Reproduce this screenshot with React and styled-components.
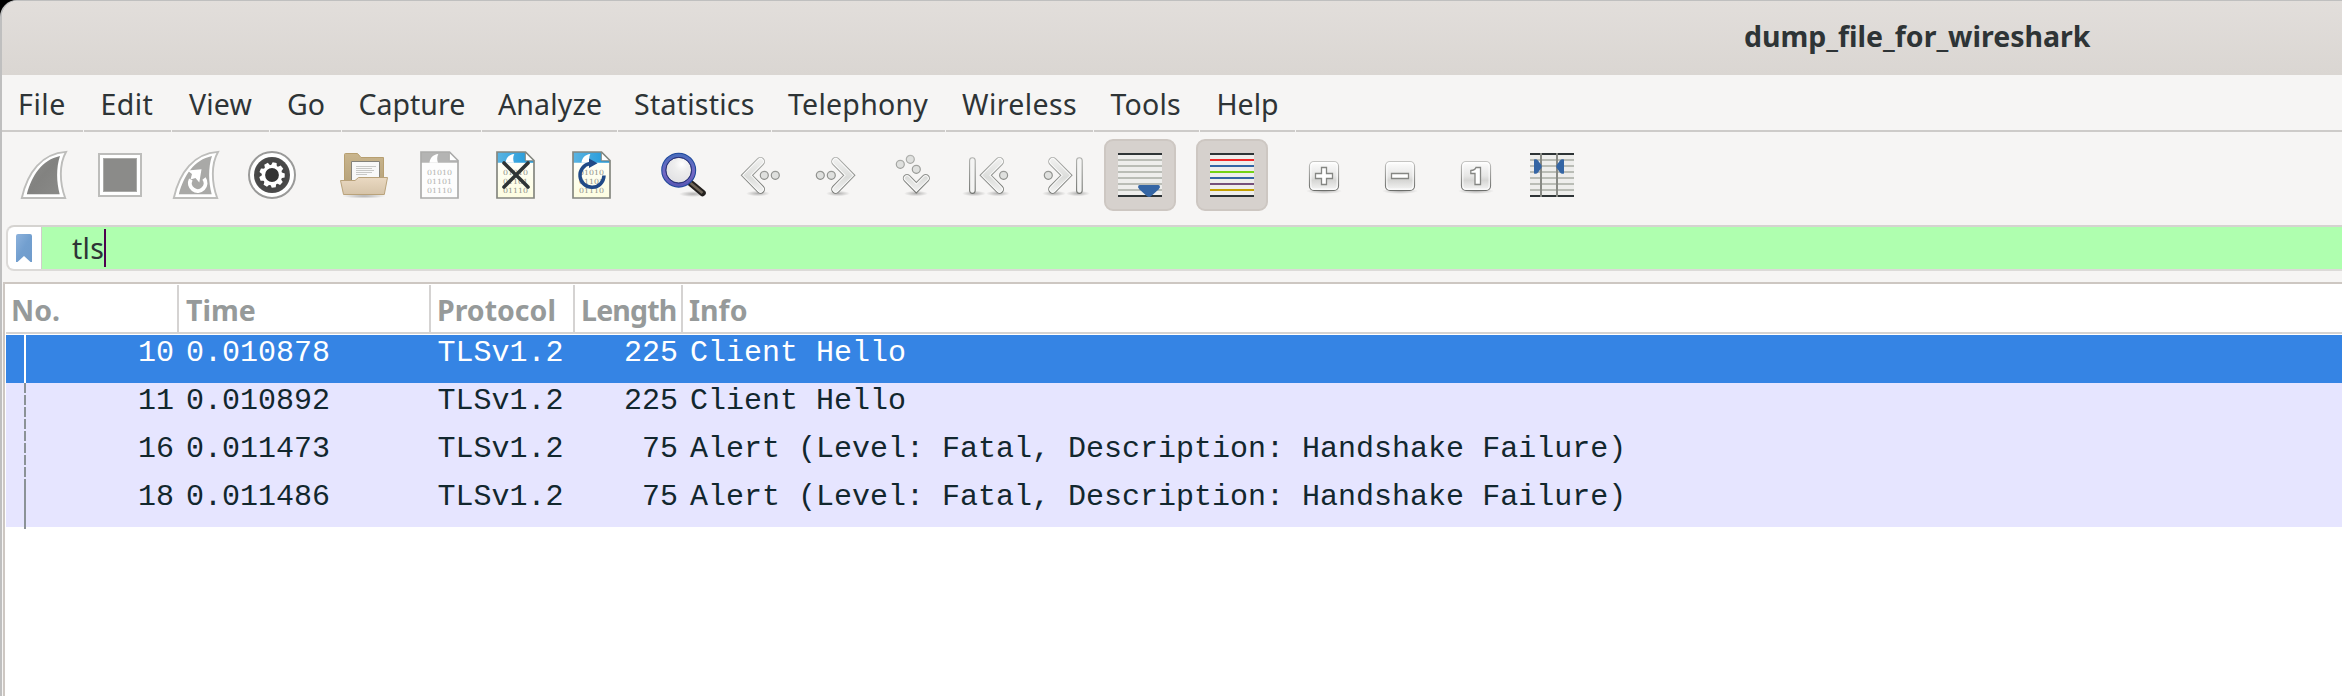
import React from "react";
import styled, { createGlobalStyle, css } from "styled-components";

const GlobalStyle = createGlobalStyle`
  html, body { margin: 0; background: #000; }
  body { width: 2342px; height: 696px; overflow: hidden; }
  * { box-sizing: border-box; }
`;

const ui = `"Noto Sans", "Open Sans", sans-serif`;

const Desktop = styled.div`
  width: 2342px;
  height: 696px;
  overflow: hidden;
  background: #000;
`;

const Window = styled.div`
  display: flex;
  flex-direction: column;
  width: 2360px;
  height: 720px;
  background: #f6f5f4;
  border-left: 2px solid #bfbfbf;
  border-top: 1px solid #bfbfbf;
  border-top-left-radius: 17px;
  overflow: hidden;
`;

const TitleBar = styled.header`
  height: 74px;
  flex: none;
  display: flex;
  padding-left: 1742px;
  background: linear-gradient(#e2dedb, #dad6d2);
`;

const Title = styled.h1`
  margin: 0;
  font: 700 28.5px/70px ${ui};
  color: #2e3436;
  white-space: nowrap;
`;

const MenuBar = styled.nav`
  display: flex;
  flex: none;
  height: 57px;
  &::after {
    content: "";
    flex: 1;
    border-bottom: 2px solid #cdcbc9;
  }
`;

const MenuItem = styled.div`
  width: ${(p) => p.$width - 1}px;
  margin-right: 1px;
  padding-left: ${(p) => p.$pad}px;
  border-bottom: 2px solid #cdcbc9;
  font: 400 28.5px/59px ${ui};
  letter-spacing: ${(p) => p.$spacing}px;
  color: #2e3436;
  white-space: nowrap;
`;

const Toolbar = styled.div`
  display: flex;
  flex: none;
  gap: 20px;
  height: 93px;
  padding: 7px 0 0 6px;
`;

const ToolGroup = styled.div`
  display: flex;
  gap: 4px;
`;

const ToolButton = styled.div`
  display: grid;
  place-items: center;
  width: 72px;
  height: 72px;
  border-radius: 9px;
  ${(p) =>
    p.$on &&
    css`
      background: #d6d1cd;
      border: 2px solid #cdc7c2;
    `}
`;

const FilterBar = styled.div`
  display: flex;
  flex: none;
  height: 46px;
  margin-left: 4px;
  border: 2px solid #dcdad8;
  border-top-color: #d5d3d0;
  border-radius: 8px;
  background: #fff;
  overflow: hidden;
`;

const BookmarkButton = styled.div`
  width: 34px;
  padding: 6px 0 0 8px;
  border-right: 1px solid #d0cecb;
`;

const FilterField = styled.div`
  flex: 1;
  display: flex;
  align-items: flex-start;
  padding-left: 30px;
  background: #afffaf;
  font: 400 28.5px/42px ${ui};
  letter-spacing: 0.3px;
  color: #2e3436;
`;

const Caret = styled.span`
  width: 2px;
  height: 38px;
  margin-top: 2px;
  background: #500050;
`;

const PacketList = styled.section`
  flex: 1;
  margin: 11px 0 0 1px;
  background: #fff;
  border-left: 2px solid #cdc7c2;
  border-top: 2px solid #cdc7c2;
  padding-left: 1px;
`;

const columns = "173px 252px 144px 108px 1fr";

const HeaderRow = styled.div`
  display: grid;
  grid-template-columns: ${columns};
  grid-template-rows: 50px;
  height: 51px;
  padding-top: 1px;
`;

const HeaderCell = styled.div`
  min-width: 0;
  border-right: 2px solid #d5d3d2;
  border-bottom: 2px solid #d5d3d2;
  margin-bottom: 1px;
  padding-left: ${(p) => p.$pad}px;
  font: 700 28.5px/51px ${ui};
  letter-spacing: ${(p) => p.$spacing}px;
  color: #969a9a;
  white-space: nowrap;
`;

const Row = styled.div`
  display: grid;
  grid-template-columns: ${columns};
  height: 48px;
  background: ${(p) => (p.$selected ? "#3584e4" : "#e6e5ff")};
  color: ${(p) => (p.$selected ? "#fff" : "#12272e")};
  font: 400 30px/36px "Liberation Mono", monospace;
  white-space: pre;
`;

const Cell = styled.div`
  padding-left: ${(p) => p.$pad || 0}px;
  padding-right: 5px;
  text-align: ${(p) => (p.$right ? "right" : "left")};
`;

const NumberCell = styled(Cell)`
  display: flex;
  justify-content: space-between;
  padding-left: 18px;
`;

const lineFill = {
  solid: "#8b9297",
  white: "#fff",
  dashed: "repeating-linear-gradient(#8b9297 0 10px, transparent 10px 12px)",
};

const StreamLine = styled.i`
  width: 2px;
  height: ${(p) => (p.$last ? 50 : 48)}px;
  background: ${(p) => lineFill[p.$kind]};
`;

const Icon = ({ children }) => (
  <svg width="48" height="48" viewBox="0 0 48 48" fill="none" overflow="visible">
    {children}
  </svg>
);

const HiddenSvg = styled.svg`
  display: block;
  height: 0;
  position: absolute;
`;

const Defs = () => (
  <HiddenSvg width="0" height="0">
    <defs>
      <linearGradient id="fin" x1="0" y1="0" x2="1" y2="1">
        <stop offset="0" stopColor="#8e8e8c" />
        <stop offset=".5" stopColor="#828280" />
        <stop offset="1" stopColor="#8a8a88" />
      </linearGradient>
      <linearGradient id="sky" x1="0" y1="0" x2="1" y2="0">
        <stop offset="0" stopColor="#5bb4e2" />
        <stop offset="1" stopColor="#1c98da" />
      </linearGradient>
      <linearGradient id="page" x1="0" y1="0" x2="0" y2="1">
        <stop offset="0" stopColor="#fff" />
        <stop offset="1" stopColor="#fdfde0" />
      </linearGradient>
      <linearGradient id="edge" gradientUnits="userSpaceOnUse" x1="0" y1="4" x2="0" y2="44">
        <stop offset="0" stopColor="#b4b5b2" />
        <stop offset="1" stopColor="#6f716d" />
      </linearGradient>
      <linearGradient id="metal" gradientUnits="userSpaceOnUse" x1="0" y1="6" x2="0" y2="43">
        <stop offset="0" stopColor="#f2f2f1" />
        <stop offset=".55" stopColor="#dcdddb" />
        <stop offset="1" stopColor="#f4f4f3" />
      </linearGradient>
      <linearGradient id="key" x1="0" y1="0" x2="0" y2="1">
        <stop offset="0" stopColor="#fdfdfd" />
        <stop offset=".5" stopColor="#e6e6e5" />
        <stop offset=".65" stopColor="#d6d6d4" />
        <stop offset="1" stopColor="#f6f6f6" />
      </linearGradient>
      <linearGradient id="keyEdge" x1="0" y1="0" x2="0" y2="1">
        <stop offset="0" stopColor="#c4c4c2" />
        <stop offset="1" stopColor="#6d6e6b" />
      </linearGradient>
      <linearGradient id="folderBack" x1="0" y1="0" x2="0" y2="1">
        <stop offset="0" stopColor="#c9b58d" />
        <stop offset="1" stopColor="#b19d76" />
      </linearGradient>
      <linearGradient id="folderFront" x1="0" y1="0" x2="0" y2="1">
        <stop offset="0" stopColor="#ead9c2" />
        <stop offset="1" stopColor="#d6c4a9" />
      </linearGradient>
      <linearGradient id="rim" x1="0" y1="0" x2="0" y2="1">
        <stop offset="0" stopColor="#4c6cbc" />
        <stop offset=".6" stopColor="#7468c4" />
        <stop offset="1" stopColor="#5a58b4" />
      </linearGradient>
      <radialGradient id="lens" cx=".6" cy=".3" r=".8">
        <stop offset="0" stopColor="#fff" />
        <stop offset=".3" stopColor="#eeeeee" />
        <stop offset="1" stopColor="#dcdcdf" />
      </radialGradient>
      <radialGradient id="shade">
        <stop offset="0" stopColor="#000" stopOpacity=".28" />
        <stop offset="1" stopColor="#000" stopOpacity="0" />
      </radialGradient>
      <radialGradient id="disc">
        <stop offset="0" stopColor="#333" />
        <stop offset="1" stopColor="#4c4c4c" />
      </radialGradient>
      <linearGradient id="ribbon" x1="0" y1="0" x2="1" y2="1">
        <stop offset="0" stopColor="#8db2dc" />
        <stop offset=".5" stopColor="#729fcf" />
        <stop offset="1" stopColor="#6f9bcb" />
      </linearGradient>
    </defs>
  </HiddenSvg>
);

const Fin = ({ fill }) => (
  <>
    <path d="M1.8 47C7.500 21 22 2.500 46 .9C39 13 39.500 32 45.200 47Z" fill="#fff" stroke="#bdbdbb" strokeWidth="1.900" />
    <path d="M6.800 43.200C12 24 22 9 40 5C36 17 36.500 31 39.700 43.200Z" fill={fill} />
  </>
);

const StartIcon = () => (
  <Icon>
    <Fin fill="url(#fin)" />
  </Icon>
);

const StopIcon = () => (
  <Icon>
    <rect x="3" y="3" width="42" height="42" fill="#fff" stroke="#bdbdbb" strokeWidth="2" />
    <rect x="7.500" y="7.500" width="33" height="33" fill="#8b8b89" stroke="#a9a9a7" />
  </Icon>
);

const RestartIcon = () => (
  <Icon>
    <Fin fill="#a9a9a7" />
    <path d="M18.800 28.500A7.800 7.800 0 1 0 32 27.500" stroke="#fff" strokeWidth="4" />
    <path d="M15.500 19.500L29.500 18.300L27.300 31.500L23.500 27L18.500 28.500L20 23Z" fill="#fff" />
  </Icon>
);

const GearIcon = () => (
  <Icon>
    <circle cx="24" cy="24" r="23" fill="#fff" stroke="#9a9a99" strokeWidth="2" />
    <circle cx="24" cy="24" r="18" fill="url(#disc)" />
    {[0, 40, 80, 120, 160, 200, 240, 280, 320].map((a) => (
      <path key={a} d="M21 15L22 11.300H26L27 15Z" fill="#fff" transform={`rotate(${a + 12} 24 24)`} />
    ))}
    <circle cx="24" cy="24" r="8.600" fill="#333" stroke="#fff" strokeWidth="3.400" />
  </Icon>
);

const OpenIcon = () => (
  <Icon>
    <ellipse cx="24" cy="45" rx="22" ry="2.600" fill="url(#shade)" />
    <path d="M4.500 40V3.500Q4.500 2.500 5.500 2.500H17.500L21 6.500H43.500V40Z" fill="url(#folderBack)" stroke="#b79f70" />
    <path d="M11.500 32V10.500H39.500V32Z" fill="#f8f8f8" stroke="#84827a" />
    <path d="M16 15.500H36M16 17.500H32M16 19.500H34M16 21.500H32M16 23.500H27" stroke="#c2c2c0" strokeWidth=".9" />
    <path d="M.5 29.500H15L18.500 26.500H47.500L44.300 43.500H3.500Z" fill="url(#folderFront)" stroke="#b9a27a" strokeLinejoin="round" />
  </Icon>
);

const Page = ({ band, fill, edge, ink, children }) => (
  <Icon>
    <path d="M5 1H33.500L42 9.500V47H5Z" fill={fill} />
    <path d="M5 1H33.500L42 9.500V11.800H5Z" fill={band} />
    <path d="M13.500 11.800C14 7 17 3.500 22.300 3C20.800 6 21 9 22 11.800Z" fill="#fff" />
    <path d="M33.300 1.500V9.800H42" fill="#fff" stroke={edge} strokeWidth="1" />
    <path d="M5 1H33.500L42 9.500V47H5Z" stroke={edge} strokeWidth="1.700" />
    <g fill={ink} fontFamily="DejaVu Serif, serif" fontSize="7.200">
      <text x="11" y="23.700" textLength="25" lengthAdjust="spacingAndGlyphs">01010</text>
      <text x="11" y="32.700" textLength="25" lengthAdjust="spacingAndGlyphs">01101</text>
      <text x="11" y="41.700" textLength="25" lengthAdjust="spacingAndGlyphs">01110</text>
    </g>
    {children}
  </Icon>
);

const SaveIcon = () => <Page band="#b4b4b3" fill="#fdfdfd" edge="#acacab" ink="#b0b0ae" />;

const CloseIcon = () => (
  <Page band="url(#sky)" fill="url(#page)" edge="#85877f" ink="#8e8f87">
    <path d="M12 12L36 36M36 12L12 36" stroke="#2e3436" strokeWidth="3.600" strokeLinecap="round" />
  </Page>
);

const ReloadIcon = () => (
  <Page band="url(#sky)" fill="url(#page)" edge="#85877f" ink="#8e8f87">
    <path d="M36 24.500A12 12 0 1 1 22 12.500" stroke="#204a87" strokeWidth="3.500" />
    <path d="M21 7.500L29.500 12.200L21 17Z" fill="#204a87" />
  </Page>
);

const FindIcon = () => (
  <Icon>
    <ellipse cx="33" cy="43" rx="14" ry="3" fill="url(#shade)" />
    <path d="M30.500 32L42.500 42" stroke="#24211e" strokeWidth="6.600" strokeLinecap="round" />
    <path d="M30.500 32L42.500 42" stroke="#6e6458" strokeWidth="2.600" />
    <circle cx="18.700" cy="19.200" r="15" fill="url(#lens)" stroke="#204a9c" strokeWidth="5" />
    <circle cx="18.700" cy="19.200" r="14.800" stroke="url(#rim)" strokeWidth="3.200" />
    <circle cx="18.700" cy="19.200" r="12.800" stroke="#2c2a6c" strokeWidth=".9" />
  </Icon>
);

const Ball = ({ x, y = 24.3 }) => (
  <circle cx={x} cy={y} r="4" fill="#dfe0de" stroke="url(#edge)" strokeWidth="1.200" />
);

const Chevron = ({ d, w = 9 }) => (
  <>
    <path d={d} stroke="url(#edge)" strokeWidth={w} strokeLinecap="round" />
    <path d={d} stroke="#fafafa" strokeWidth={w - 2} strokeLinecap="round" />
    <path d={d} stroke="url(#metal)" strokeWidth={w - 4} strokeLinecap="round" />
  </>
);

const Bar = ({ x }) => (
  <rect x={x} y="6.800" width="5.600" height="35.600" rx="2.800" fill="#f4f4f3" stroke="url(#edge)" strokeWidth="1.100" />
);

const Shadow = ({ x }) => <ellipse cx={x} cy="42.500" rx="12" ry="2.800" fill="url(#shade)" />;

const PrevIcon = () => (
  <Icon>
    <Shadow x={22} />
    <Chevron d="M24.500 10.500L10.900 24.300L24.500 38.200" />
    <Ball x={28.3} />
    <Ball x={39.3} />
  </Icon>
);

const NextIcon = () => (
  <Icon>
    <Shadow x={26} />
    <Chevron d="M23.700 10.500L37.300 24.300L23.700 38.200" />
    <Ball x={8.3} />
    <Ball x={19.3} />
  </Icon>
);

const GotoIcon = () => (
  <Icon>
    <Shadow x={28} />
    <Ball x={12.3} y={13.3} />
    <Ball x={22.3} y={8.3} />
    <Ball x={28.3} y={18.3} />
    <Chevron d="M19 27.300L28.300 36.700L37.700 27.300" w={8.4} />
  </Icon>
);

const FirstIcon = () => (
  <Icon>
    <Shadow x={10} />
    <Shadow x={34} />
    <Bar x={5.6} />
    <Chevron d="M35.500 10.500L21.700 24.300L35.500 38.200" />
    <Ball x={39.6} />
  </Icon>
);

const LastIcon = () => (
  <Icon>
    <Shadow x={14} />
    <Shadow x={38} />
    <Bar x={36.6} />
    <Chevron d="M12.700 10.500L26.400 24.300L12.700 38.200" />
    <Ball x={8.3} />
  </Icon>
);

const Lines = ({ colors }) => (
  <>
    <rect x="2" y="2" width="44" height="44" fill="#eeeeec" />
    <path d="M2 3H46M2 45H46" stroke="#2e3436" strokeWidth="2" />
    {colors.map((c, i) => (
      <path key={i} d={`M2 ${9 + i * 6}H46`} stroke={c} strokeWidth="2" />
    ))}
  </>
);
const grayLines = Array(6).fill("#babdb6");

const AutoScrollIcon = () => (
  <Icon>
    <Lines colors={grayLines} />
    <path d="M23.500 34H42.500Q44.500 34.300 43.800 36.500L42.500 38.500L35 45.300Q33 46.500 31 45.300L23.500 38.500L22.200 36.500Q21.500 34.300 23.500 34Z" fill="#3465a4" />
  </Icon>
);

const ColorizeIcon = () => (
  <Icon>
    <Lines colors={["#ef2929", "#3465a4", "#73d216", "#3465a4", "#75507b", "#c4a000"]} />
  </Icon>
);

const Key = ({ children }) => (
  <Icon>
    <ellipse cx="24" cy="40" rx="18" ry="3" fill="url(#shade)" />
    <rect x="9.500" y="10.500" width="29" height="29" rx="4.500" fill="url(#key)" stroke="url(#keyEdge)" strokeWidth="1.200" />
    <rect x="10.800" y="11.800" width="26.400" height="26.400" rx="3.400" stroke="#fff" strokeOpacity=".8" strokeWidth="1.200" />
    <g fill="#fff" stroke="#858683" strokeWidth="1.300">{children}</g>
  </Icon>
);

const ZoomInIcon = () => (
  <Key>
    <path d="M21.500 16.500H26.500V22.500H32.500V27.500H26.500V33.500H21.500V27.500H15.500V22.500H21.500Z" />
  </Key>
);
const ZoomOutIcon = () => (
  <Key>
    <path d="M15.500 22.500H32.500V27.500H15.500Z" />
  </Key>
);
const ZoomResetIcon = () => (
  <Key>
    <path d="M24 16.500H28.500V33.500H23V22.500H18.800V19.500Q23 19.300 24 16.500Z" />
  </Key>
);

const ResizeIcon = () => (
  <Icon>
    <Lines colors={grayLines} />
    <path d="M13 2V46M29 2V46" stroke="#888a85" strokeWidth="2" />
    <path d="M6 8.500Q8.500 7.500 10 9.500L13.300 14Q14.200 15.500 13.300 17L10 21.500Q8.500 23.500 6 22.500Z" fill="#3465a4" />
    <path d="M36 8.500Q33.500 7.500 32 9.500L28.700 14Q27.800 15.500 28.700 17L32 21.500Q33.500 23.500 36 22.500Z" fill="#3465a4" />
  </Icon>
);

const menus = [
  ["File", 82, 16, 0.6],
  ["Edit", 88, 16.5, 0.4],
  ["View", 98, 17, 0.2],
  ["Go", 72, 17, 0],
  ["Capture", 140, 16.5, 0],
  ["Analyze", 136, 16, 0.15],
  ["Statistics", 154, 16, 0.25],
  ["Telephony", 174, 16, 0.25],
  ["Wireless", 148, 16, 0.4],
  ["Tools", 106, 16.5, 0.2],
  ["Help", 96, 16.5, 0],
];

const toolGroups = [
  [StartIcon, StopIcon, RestartIcon, GearIcon],
  [OpenIcon, SaveIcon, CloseIcon, ReloadIcon],
  [FindIcon, PrevIcon, NextIcon, GotoIcon, FirstIcon, LastIcon, AutoScrollIcon],
  [ColorizeIcon],
  [ZoomInIcon, ZoomOutIcon, ZoomResetIcon, ResizeIcon],
];

const headers = [
  ["No.", 5, 0],
  ["Time", 7, 0],
  ["Protocol", 6, 0],
  ["Length", 6, -0.8],
  ["Info", 6, 0],
];

const failure = "Alert (Level: Fatal, Description: Handshake Failure)";
const packets = [
  { no: "10", time: "0.010878", protocol: "TLSv1.2", len: "225", info: "Client Hello", line: "white" },
  { no: "11", time: "0.010892", protocol: "TLSv1.2", len: "225", info: "Client Hello", line: "dashed" },
  { no: "16", time: "0.011473", protocol: "TLSv1.2", len: "75", info: failure, line: "dashed" },
  { no: "18", time: "0.011486", protocol: "TLSv1.2", len: "75", info: failure, line: "solid" },
];

export default function App() {
  return (
    <Desktop>
      <GlobalStyle />
      <Defs />
      <Window>
        <TitleBar>
          <Title>dump_file_for_wireshark</Title>
        </TitleBar>
        <MenuBar>
          {menus.map(([name, width, pad, spacing]) => (
            <MenuItem key={name} $width={width} $pad={pad} $spacing={spacing}>
              {name}
            </MenuItem>
          ))}
        </MenuBar>
        <Toolbar>
          {toolGroups.map((group, g) => (
            <ToolGroup key={g}>
              {group.map((Glyph, i) => (
                <ToolButton key={i} $on={Glyph === AutoScrollIcon || Glyph === ColorizeIcon}>
                  <Glyph />
                </ToolButton>
              ))}
            </ToolGroup>
          ))}
        </Toolbar>
        <FilterBar>
          <BookmarkButton>
            <svg width="16" height="30" viewBox="0 0 16 30">
              <path d="M2 1H14Q16 1 16 3V29H14.500L8 23L1.500 29H0V3Q0 1 2 1Z" fill="url(#ribbon)" />
            </svg>
          </BookmarkButton>
          <FilterField>
            tls
            <Caret />
          </FilterField>
        </FilterBar>
        <PacketList>
          <HeaderRow>
            {headers.map(([name, pad, spacing]) => (
              <HeaderCell key={name} $pad={pad} $spacing={spacing}>
                {name}
              </HeaderCell>
            ))}
          </HeaderRow>
          {packets.map((p, i) => (
            <Row key={p.no} $selected={i === 0}>
              <NumberCell>
                <StreamLine $kind={p.line} $last={i === 3} />
                {p.no}
              </NumberCell>
              <Cell $pad={7}>{p.time}</Cell>
              <Cell $pad={6.5}>{p.protocol}</Cell>
              <Cell $right>{p.len}</Cell>
              <Cell $pad={7}>{p.info}</Cell>
            </Row>
          ))}
        </PacketList>
      </Window>
    </Desktop>
  );
}
